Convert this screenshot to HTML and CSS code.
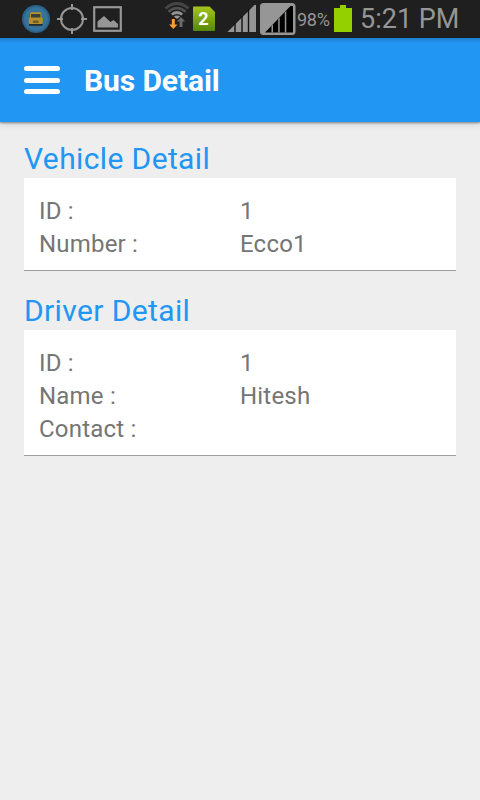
FILE: index.html
```html
<!DOCTYPE html>
<html lang="en">
<head>
<meta charset="utf-8">
<title>Bus Detail</title>
<link rel="stylesheet" href="styles.css">
</head>
<body>
<div class="status">
  <svg class="notifications" width="102" height="38" viewBox="22 0 102 38">
    <defs>
      <radialGradient id="globe"><stop offset="0" stop-color="#34617c"/><stop offset=".75" stop-color="#37759f"/><stop offset="1" stop-color="#285b80"/></radialGradient>
    </defs>
    <circle cx="36" cy="19" r="14" fill="url(#globe)"/>
    <rect x="30" y="12.300" width="11.500" height="7" rx="1.500" fill="#b5922b"/>
    <rect x="28.800" y="17.300" width="14" height="6.700" rx="1.500" fill="#b5902a"/>
    <rect x="31" y="14" width="9.500" height="3.500" fill="#38403a"/>
    <rect x="33" y="20.500" width="5.500" height="2.500" fill="#6e5f2c"/>
    <path d="M29 24h13.500v1.800H29z" fill="#262c30"/>
    <g fill="none" stroke="#969696" stroke-width="2">
      <circle cx="72" cy="19" r="11"/>
      <path d="M72 4v6M72 28v6M57 19h6M81 19h6"/>
      <rect x="94.200" y="7.200" width="26.600" height="23.600" stroke-width="2.200"/>
    </g>
    <path d="M97.500 27.500v-6l6.500-5.500 6.500 6 3-2 4.500 4v3.500z" fill="#969696"/>
  </svg>
  <svg class="signals" width="132" height="38" viewBox="164 0 132 38">
    <defs>
      <linearGradient id="sim" x2="0" y2="1"><stop offset="0" stop-color="#a6c51d"/><stop offset="1" stop-color="#55870b"/></linearGradient>
    </defs>
    <g fill="none" stroke-width="2.800">
      <path d="M165.500 8.500Q177 -1.500 188.500 8.500" stroke="#454545"/>
      <path d="M168.500 11.700Q177 4.500 185.500 11.700" stroke="#505050"/>
      <path d="M171.800 14.500Q177 10.500 182.200 14.500" stroke="#929292"/>
    </g>
    <path d="M173.800 16.500q3.200-2 6.400 0l-3.200 2.500z" fill="#969696"/>
    <path d="M171.800 19h3v5.500h2.700l-4.200 4.500-4.200-4.500h2.700z" fill="#ff9c2f"/>
    <path d="M181 17l4.200 4.500h-2.700V27h-3v-5.500h-2.700z" fill="#6b6b6b"/>
    <path d="M194 6.500H209.500l5.500 5.500V30q0 1-1 1h-20q-1 0-1-1V7.500q0-1 1-1z" fill="url(#sim)"/>
    <text x="203.300" y="25.200" class="sim-number">2</text>
    <path d="M227.500 32L254.500 5H256v27z" fill="#969696"/>
    <path d="M235 23v9M242 16v16M248.500 9v23" stroke="#111" stroke-width="1.400"/>
    <rect x="260" y="3" width="35.500" height="32" rx="3.500" fill="#969696"/>
    <path d="M265 32.500L290.500 6h2.500v26.500z" fill="#000"/>
    <path d="M271.500 26l1.500-1.500v8h-1.500zM278.200 19l1.500-1.500v15h-1.500zM284.800 12.500l1.500-1.500v21.500h-1.500z" fill="#969696"/>
  </svg>
  <span class="percent">98%</span>
  <svg class="battery" width="18" height="38" viewBox="0 0 18 38"><path d="M6 5h6v3h6v24H0V8h6z" fill="#94d000"/></svg>
  <span class="clock">5:21 PM</span>
</div>
<header class="toolbar">
  <div class="menu"><i></i><i></i><i></i></div>
  <h1>Bus Detail</h1>
</header>
<main>
  <section>
    <h2>Vehicle Detail</h2>
    <dl><dt>ID :</dt><dd>1</dd><dt>Number :</dt><dd>Ecco1</dd></dl>
  </section>
  <section>
    <h2>Driver Detail</h2>
    <dl><dt>ID :</dt><dd>1</dd><dt>Name :</dt><dd>Hitesh</dd><dt>Contact :</dt><dd></dd></dl>
  </section>
</main>
</body>
</html>
```
FILE: styles.css
```css
* { box-sizing: border-box; }
body { margin: 0; height: 800px; background: #eee; font-family: Roboto, "Liberation Sans", sans-serif; overflow: hidden; }
.status { height: 38px; display: flex; background: #1f1f1f; color: #969696; padding-left: 22px; white-space: nowrap; }
.status svg { flex: none; display: block; }
.signals { margin-left: 40px; }
.sim-number { font: bold 18px Roboto, sans-serif; fill: #fff; text-anchor: middle; }
.percent { width: 38px; padding-left: 1px; font-size: 18px; line-height: 39px; letter-spacing: -.3px; }
.clock { margin-left: 8px; font-size: 27px; line-height: 38px; letter-spacing: 0; }
.toolbar { height: 84px; display: flex; align-items: center; padding-left: 24px; background: linear-gradient(#1d7fcc, #2196f3 5px); box-shadow: 0 1px 2px rgba(0,0,0,.4), 0 2px 7px rgba(0,0,0,.14); }
.menu { width: 36px; height: 28px; display: flex; flex-direction: column; justify-content: space-between; }
.menu i { height: 5px; border-radius: 2.5px; background: #fff; }
h1 { margin: 0 0 0 24px; padding-top: 2px; color: #fff; font-size: 30px; line-height: 36px; font-weight: 700; letter-spacing: -.1px; }
main { padding: 19px 24px 0; }
section { margin-bottom: 22px; }
h2 { margin: 0; height: 37px; color: #2196f3; font-size: 30px; line-height: 36px; font-weight: 400; letter-spacing: .38px; }
dl { margin: 0; padding: 17px 15px 9px; display: grid; grid-template-columns: 201px 1fr; grid-auto-rows: 33px; background: #fff; border-bottom: 1px solid #9e9e9e; color: #757575; font-size: 24px; line-height: 33px; letter-spacing: .2px; }
dd { margin: 0; }
```
